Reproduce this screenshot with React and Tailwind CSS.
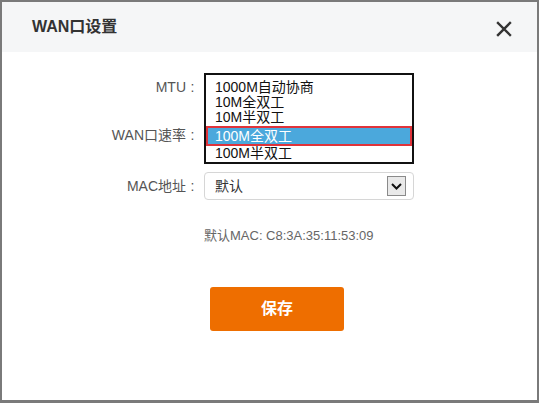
import React from 'react'

const font = { fontFamily: '"Liberation Sans", "Noto Sans CJK SC", sans-serif' }

const speedOptions = ['1000M自动协商', '10M全双工', '10M半双工', '100M全双工', '100M半双工']

function CloseIcon() {
    return (
        <svg width="16" height="16" viewBox="0 0 16 16" className="text-[#333]">
            <path d="M2 2L14 14M14 2L2 14" stroke="currentColor" strokeWidth="2.4" strokeLinecap="square" />
        </svg>
    )
}

function ChevronBox() {
    return (
        <div className="flex h-[20px] w-[19px] items-center justify-center border border-[#8a8a8a] bg-[#e9e9e9]">
            <svg width="11" height="7" viewBox="0 0 11 7">
                <path d="M1 1L5.5 5.5L10 1" stroke="#111" strokeWidth="2" fill="none" />
            </svg>
        </div>
    )
}

// Opened native-style list of the WAN speed select
function SpeedList({ selected }) {
    return (
        <div className="absolute left-0 top-0 z-10 h-[91px] w-[210px] border-2 border-[#111] bg-white pt-[5px]">
            {speedOptions.map((opt) => (
                opt === selected ? (
                    <div key={opt} className="mt-[1px] h-[20px] border-2 border-[#e0333a] bg-[#4ba8dc] pl-[7px] text-[14px] leading-[16px] text-white">
                        {opt}
                    </div>
                ) : (
                    <div key={opt} className="h-[15px] pl-[9px] text-[14px] leading-[15px] text-[#111]">
                        {opt}
                    </div>
                )
            ))}
        </div>
    )
}

function Row({ label, children, className }) {
    return (
        <div className={`flex h-[28px] items-center ${className || ''}`}>
            <div className="flex w-[202px] justify-end pr-[5px] text-[14px] text-[#555]">
                <span>{label}</span>
                <span className="w-[13px] text-center">:</span>
            </div>
            <div className="relative h-[28px] w-[210px]">{children}</div>
        </div>
    )
}

export default function App() {
    return (
        <div className="h-[403px] w-[539px] bg-[#7a7a7a] pb-[3px] pl-[2px] pr-[2px] pt-[2px]" style={font}>
            <div className="flex h-full flex-col bg-white">
                <div className="flex h-[50px] items-center justify-between bg-[#f5f6f7] pl-[30px] pr-[25px]">
                    <span className="text-[16px] font-bold text-[#333]">WAN口设置</span>
                    <span className="mt-[3px]"><CloseIcon /></span>
                </div>

                <div className="flex flex-col pt-[21px]">
                    <Row label="MTU">
                        <div className="h-full w-full rounded-sm border border-[#ccc]" />
                        <SpeedList selected="100M全双工" />
                    </Row>

                    <Row label="WAN口速率" className="mt-[20px]">
                        <div className="h-full w-full rounded-sm border border-[#ccc]" />
                    </Row>

                    <Row label="MAC地址" className="mt-[23px]">
                        <div className="flex h-[28px] w-full items-center justify-between rounded-sm border border-[#d6d6d6] pl-[10px] pr-[7px] text-[14px] text-[#333]">
                            <span>默认</span>
                            <ChevronBox />
                        </div>
                    </Row>

                    <div className="mt-[26px] pl-[202px] text-[13px] text-[#666]">默认MAC: C8:3A:35:11:53:09</div>

                    <div className="mt-[41px] pl-[208px]">
                        <button type="button" className="h-[44px] w-[134px] rounded-[3px] bg-[#ee6e00] text-[16px] font-bold text-white">
                            保存
                        </button>
                    </div>
                </div>
            </div>
        </div>
    )
}
